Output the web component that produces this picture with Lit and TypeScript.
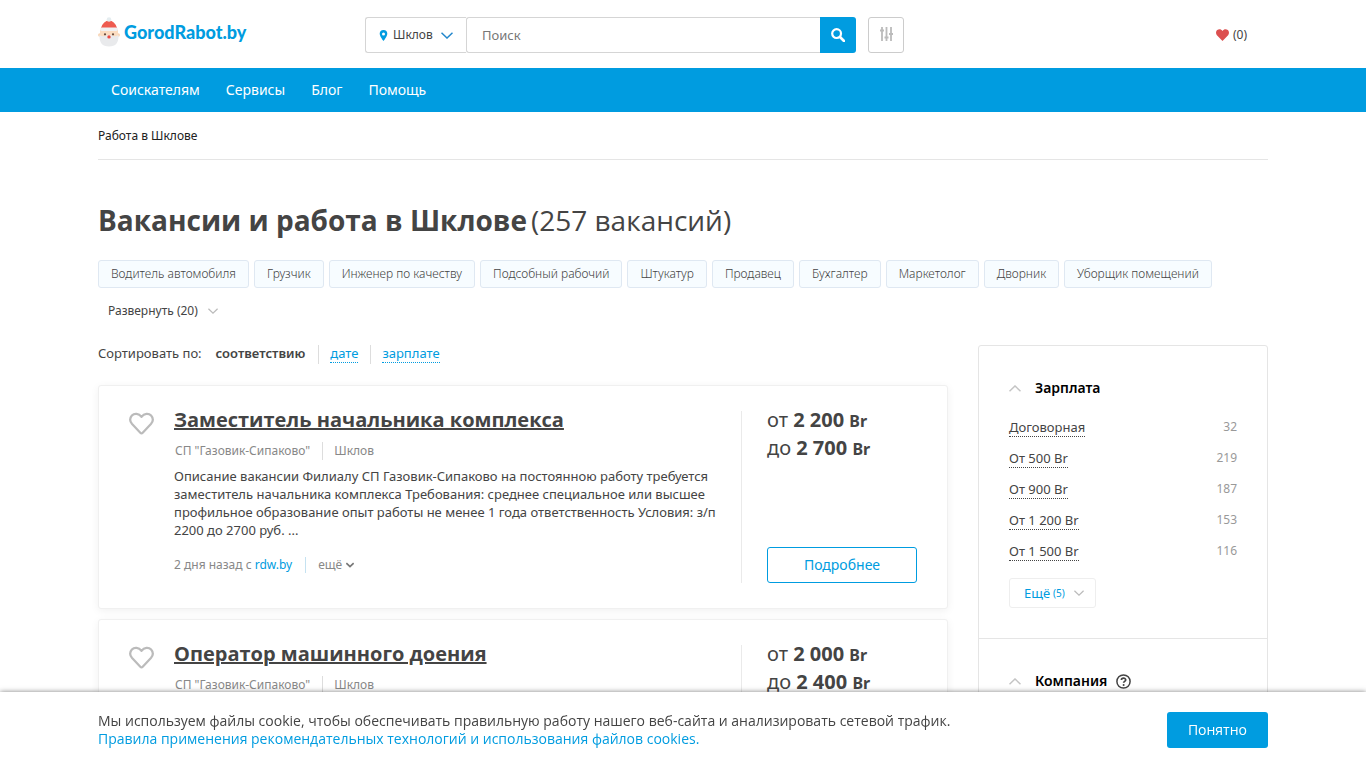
import { LitElement, html, css, svg, nothing } from "lit";
import { customElement, property, state } from "lit/decorators.js";

interface Vacancy {
  title: string;
  company: string;
  city: string;
  from: string;
  to: string;
  text?: string;
  age?: string;
  source?: string;
}

const VACANCIES: Vacancy[] = [
  {
    title: "Заместитель начальника комплекса",
    company: 'СП "Газовик-Сипаково"',
    city: "Шклов",
    text: "Описание вакансии Филиалу СП Газовик-Сипаково на постоянною работу требуется заместитель начальника комплекса Требования: среднее специальное или высшее профильное образование опыт работы не менее 1 года ответственность Условия: з/п 2200 до 2700 руб. ...",
    from: "2 200",
    to: "2 700",
    age: "2 дня назад",
    source: "rdw.by",
  },
  {
    title: "Оператор машинного доения",
    company: 'СП "Газовик-Сипаково"',
    city: "Шклов",
    from: "2 000",
    to: "2 400",
  },
];

const TAGS = [
  "Водитель автомобиля", "Грузчик", "Инженер по качеству", "Подсобный рабочий", "Штукатур",
  "Продавец", "Бухгалтер", "Маркетолог", "Дворник", "Уборщик помещений",
];

const SALARIES: [string, number][] = [
  ["Договорная", 32],
  ["От 500 Br", 219],
  ["От 900 Br", 187],
  ["От 1 200 Br", 153],
  ["От 1 500 Br", 116],
];

const chevron = (width: number, height: number, stroke: string, up = false, weight = 1.5) => html`
  <svg width=${width} height=${height} viewBox="0 0 12 7" fill="none" stroke=${stroke} stroke-width=${weight} aria-hidden="true">
    ${up ? svg`<path d="M.5 6.2 6 1l5.500 5.200"/>` : svg`<path d="M.5.8 6 6 11.500.8"/>`}
  </svg>`;

const base = css`
  * { box-sizing: border-box; }
  a { color: #009ce0; text-decoration: none; }
  button, input { font: inherit; color: inherit; margin: 0; }
  button { cursor: pointer; }
  svg { display: block; flex: none; }
`;

@customElement("vacancy-card")
class VacancyCard extends LitElement {
  @property({ attribute: false }) vacancy!: Vacancy;

  static styles = [base, css`
    :host { display: block; }
    .card {
      display: flex;
      padding: 25px 30px;
      border: 1px solid #f0f0f0;
      border-radius: 3px;
      background: #fff;
      box-shadow: 0 2px 8px rgba(0, 0, 0, .06);
    }
    .like { flex: none; align-self: flex-start; width: 45px; padding: 0; border: 0; background: none; }
    .body { flex: 1; min-width: 0; padding-right: 24px; }
    .title { margin: 0 0 13px; font: 700 20px/18px "Open Sans", "Noto Sans", sans-serif; }
    .title a { color: #444; text-decoration: underline; }
    .meta { display: flex; font-size: 12px; line-height: 18px; color: #888; }
    .meta span { padding: 0 12px 0 1px; }
    .meta span + span { padding-left: 11px; border-left: 1px solid #ddd; }
    .text { margin: 7px 0 18px; line-height: 18px; }
    .foot { display: flex; font-size: 12px; line-height: 16px; color: #888; }
    .more {
      display: flex; align-items: center; gap: 4px;
      margin-left: 13px; padding: 0 0 0 12px;
      border: 0; border-left: 1px solid #c5e2f1; background: none;
    }
    .pay {
      display: flex; flex-direction: column; gap: 10px;
      flex: none; width: 176px; min-height: 172px; padding-left: 25px;
      border-left: 1px solid #eaeaea;
      font-size: 20px; line-height: 18px;
    }
    .currency { font-size: 16px; line-height: 16px; }
    .details {
      margin-top: auto; height: 36px;
      border: 1px solid #009ce0; border-radius: 3px;
      font-size: 14px; line-height: 34px; text-align: center;
    }
  `];

  render() {
    const v = this.vacancy;
    return html`
      <article class="card">
        <button class="like" aria-label="В избранное">
          <svg width="25" height="24" viewBox="0 0 25 24" fill="none" stroke="#bbb" stroke-width="2.200" stroke-linejoin="round">
            <path d="M12.500 5.800C9.800 2 5.100 2.100 2.900 4.600.7 7.100.9 10.500 3.100 13l8.200 8.800q1.200 1.300 2.400 0l8.200-8.800C24.100 10.500 24.300 7.100 22.100 4.600 19.900 2.100 15.200 2 12.500 5.800Z"/>
          </svg>
        </button>
        <div class="body">
          <h2 class="title"><a href="#">${v.title}</a></h2>
          <div class="meta"><span>${v.company}</span><span>${v.city}</span></div>
          ${v.text ? html`<p class="text">${v.text}</p>` : nothing}
          ${v.age ? html`
            <div class="foot">
              <span>${v.age} с <a href="#">${v.source}</a></span>
              <button class="more">ещё ${chevron(8, 6, "#777", false, 2.6)}</button>
            </div>` : nothing}
        </div>
        <div class="pay">
          <div>от <b>${v.from} <span class="currency">Br</span></b></div>
          <div>до <b>${v.to} <span class="currency">Br</span></b></div>
          <a class="details" href="#">Подробнее</a>
        </div>
      </article>`;
  }
}

@customElement("filter-section")
class FilterSection extends LitElement {
  @property() heading = "";
  @property({ type: Boolean }) help = false;

  static styles = [base, css`
    :host { display: block; padding: 30px; }
    :host(:not(:first-child)) { border-top: 1px solid #e5e5e5; }
    .heading {
      display: flex; align-items: center;
      margin: 0 0 18px; color: #000;
      font-size: 14px; line-height: 24px; font-weight: 600;
    }
    .label { margin: 0 9px 0 14px; }
  `];

  render() {
    return html`
      <h3 class="heading">
        ${chevron(12, 7, "#c4c4c4", true)}
        <span class="label">${this.heading}</span>
        ${this.help ? html`
          <svg width="15" height="15" viewBox="0 0 15 15" fill="none" stroke="#444" aria-hidden="true">
            <circle cx="7.500" cy="7.500" r="6.600" stroke-width="1.500"/>
            <path d="M5.400 6.100C5.400 3.500 9.700 3.500 9.700 6c0 1.400-2.100 1.300-2.100 2.800" stroke-width="1.700"/>
            <circle cx="7.600" cy="11" r="1" fill="#444" stroke="none"/>
          </svg>` : nothing}
      </h3>
      <slot></slot>`;
  }
}

@customElement("app-root")
class AppRoot extends LitElement {
  @state() private cookies = true;

  static styles = [base, css`
    :host {
      display: block;
      min-height: 100vh;
      background: #fff;
      color: #444;
      font: 13px/18px "Noto Sans", "Open Sans", sans-serif;
    }
    .wrap { max-width: 1170px; margin: 0 auto; }

    .top { display: flex; align-items: flex-start; padding: 17px 0 15px; }
    .logo { display: flex; align-items: center; gap: 4px; width: 267px; font: 900 18px/30px Lato, sans-serif; }
    .search { display: flex; width: 491px; height: 36px; }
    .city {
      display: flex; align-items: center;
      width: 101px; padding: 0 13px;
      border: 1px solid #d5d5d5; border-right: 0; border-radius: 3px 0 0 3px;
      background: #fff; font-size: 12px;
    }
    .city span { flex: 1; padding-left: 5px; text-align: left; }
    .query {
      flex: 1; min-width: 0; padding: 0 15px;
      border: 1px solid #d5d5d5; border-right: 0; border-radius: 3px 0 0 3px;
      outline: 0; background: #fff;
    }
    .query::placeholder { color: #777; opacity: 1; }
    .find {
      display: grid; place-items: center; width: 36px; padding: 0;
      border: 0; border-radius: 0 3px 3px 0; background: #009ce0;
    }
    .tune {
      display: grid; place-items: center; width: 36px; height: 36px; margin-left: 12px; padding: 0;
      border: 1px solid #ccc; border-radius: 3px; background: #fff;
    }
    .saved { display: flex; align-items: center; gap: 4px; margin: 0 21px 0 auto; color: #444; font-size: 12px; line-height: 36px; }

    .nav { background: #009ce0; }
    .links { display: flex; gap: 26px; padding: 0 13px; font-size: 14px; line-height: 44px; }
    .links a { color: #fff; }

    .crumbs { padding: 15px 0 14px; border-bottom: 1px solid #e5e5e5; font-size: 12px; color: #222; }
    .crumbs a { color: inherit; }
    .page-title {
      display: flex; flex-wrap: wrap; column-gap: 4px;
      margin: 40px 0 20px; font: 700 28px/40px "Open Sans", "Noto Sans", sans-serif;
    }
    .total { font-weight: 400; }
    .tags { display: flex; flex-wrap: wrap; gap: 5px; font-size: 12px; font-weight: 300; }
    .tags a {
      padding: 4px 12px; border: 1px solid #dfe8f2; border-radius: 3px;
      background: #f7fcff; color: #444;
    }
    .expand {
      display: flex; align-items: center; gap: 10px;
      margin: 14px 0 25px; padding: 0 10px; border: 0; background: none; font-size: 12px;
    }

    .columns { display: flex; align-items: flex-start; gap: 30px; }
    .main { flex: 1; min-width: 0; }
    .sort { display: flex; margin-bottom: 21px; line-height: 17px; }
    .sort b { margin: 0 13px 0 14px; font-weight: 600; }
    .sort div { height: 19px; padding: 0 12px 0 11px; border-left: 1px solid #ddd; }
    .sort a { display: block; border-bottom: 1px dotted #009ce0; }
    .cards { display: grid; gap: 10px; }

    .side { flex: none; width: 290px; border: 1px solid #e5e5e5; border-radius: 3px; }
    .options { display: grid; gap: 13px; margin: 0 0 18px; padding: 0; list-style: none; }
    .options li { display: flex; justify-content: space-between; height: 18px; }
    .options a { color: #444; border-bottom: 1px dotted #444; height: 19px; }
    .count { font-size: 12px; color: #999; }
    .extra {
      display: flex; align-items: center; height: 30px; padding: 0 11px 0 14px;
      border: 1px solid #eee; border-radius: 3px; background: #fff; color: #009ce0;
    }
    .extra small { margin: 0 9px 0 3px; font-size: 10px; }

    .cookie {
      position: fixed; left: 0; right: 0; bottom: 0; padding: 20px 0;
      background: #fff; box-shadow: 0 0 5px rgba(0, 0, 0, .5);
      font: 14px/18px "Open Sans", "Noto Sans", sans-serif;
    }
    .notice { display: flex; align-items: center; justify-content: space-between; }
    .notice p { margin: 0; }
    .notice a { display: block; }
    .accept { height: 36px; padding: 0 21px; border: 0; border-radius: 3px; background: #009ce0; color: #fff; }
  `];

  render() {
    return html`
      <header>
        <div class="wrap top">
          <a class="logo" href="#">
            <svg width="22" height="30" viewBox="0 0 22 30" aria-hidden="true">
              <circle cx="1.800" cy="18" r="1.800" fill="#f9d5b5"/>
              <circle cx="20.200" cy="18" r="1.800" fill="#f9d5b5"/>
              <path d="M2 13h18v7H2z" fill="#fbdcc0"/>
              <path d="M1.500 18q3 2 5 1 4.500-2 9 0 2 1 5-1Q21 29.500 11 29.500 1 29.500 1.500 18Z" fill="#e9eaec"/>
              <path d="M3 11Q5.500 3.500 11 3.500t8 7.500Z" fill="#ee5b50"/>
              <rect x="2" y="10.500" width="18" height="3.500" rx="1.700" fill="#f0f1f3"/>
              <circle cx="11" cy="2.500" r="2.300" fill="#e5edf0"/>
              <circle cx="7" cy="17.300" r="1.100" fill="#65483b"/>
              <circle cx="15" cy="17.300" r="1.100" fill="#65483b"/>
              <circle cx="11" cy="19.900" r="1.700" fill="#ed4a42"/>
            </svg>
            GorodRabot.by
          </a>
          <form class="search">
            <button class="city" type="button">
              <svg width="9" height="11" viewBox="0 0 9 11" aria-hidden="true">
                <path fill="#009ce0" fill-rule="evenodd" d="M4.500 0A3.800 3.800 0 0 0 .7 3.800C.7 6.500 4.500 11 4.500 11S8.300 6.500 8.300 3.800A3.800 3.800 0 0 0 4.500 0Zm0 2.400a1.500 1.500 0 1 1 0 3 1.500 1.500 0 0 1 0-3Z"/>
              </svg>
              <span>Шклов</span>
              ${chevron(12, 7, "#2387cc")}
            </button>
            <input class="query" type="search" placeholder="Поиск" aria-label="Поиск">
            <button class="find" type="button" aria-label="Найти">
              <svg width="14" height="14" viewBox="0 0 14 14" fill="none" stroke="#fff" aria-hidden="true">
                <circle cx="5.600" cy="5.600" r="4.400" stroke-width="2.200"/>
                <path d="m9 9 4 4" stroke-width="2.600" stroke-linecap="round"/>
              </svg>
            </button>
          </form>
          <button class="tune" aria-label="Фильтры">
            <svg width="13" height="17" viewBox="0 0 13 17" stroke="#bbb" stroke-width="1.800" aria-hidden="true">
              <path d="M2 0v14M6.500 0v14M11 0v14"/>
              <path d="M0 3.500h4M4.500 10.500h4M9 7h4"/>
            </svg>
          </button>
          <a class="saved" href="#">
            <svg width="13" height="12" viewBox="0 0 13 12" fill="#dc5050" aria-hidden="true">
              <path d="M6.500 12 .9 6.300C-.4 4.800-.2 2.300 1.200 1.100 2.900-.3 5.200 0 6.500 1.900 7.800 0 10.100-.3 11.800 1.100c1.400 1.200 1.600 3.700.3 5.200Z"/>
            </svg>
            (0)
          </a>
        </div>
        <nav class="nav">
          <div class="wrap links">
            ${["Соискателям", "Сервисы", "Блог", "Помощь"].map((t) => html`<a href="#">${t}</a>`)}
          </div>
        </nav>
      </header>

      <main class="wrap">
        <div class="crumbs"><a href="#">Работа в Шклове</a></div>
        <h1 class="page-title"><span>Вакансии и работа в Шклове</span> <span class="total">(257 вакансий)</span></h1>
        <div class="tags">${TAGS.map((t) => html`<a href="#">${t}</a>`)}</div>
        <button class="expand">Развернуть (20) ${chevron(10, 6, "#bbb")}</button>

        <div class="columns">
          <section class="main">
            <div class="sort">
              Сортировать по: <b>соответствию</b>
              <div><a href="#">дате</a></div>
              <div><a href="#">зарплате</a></div>
            </div>
            <div class="cards">
              ${VACANCIES.map((v) => html`<vacancy-card .vacancy=${v}></vacancy-card>`)}
            </div>
          </section>

          <aside class="side">
            <filter-section heading="Зарплата">
              <ul class="options">
                ${SALARIES.map(([label, count]) => html`
                  <li><a href="#">${label}</a><span class="count">${count}</span></li>`)}
              </ul>
              <button class="extra">Ещё <small>(5)</small>${chevron(10, 6, "#bbb")}</button>
            </filter-section>
            <filter-section heading="Компания" help></filter-section>
          </aside>
        </div>
      </main>

      ${this.cookies ? html`
        <div class="cookie">
          <div class="wrap notice">
            <p>
              Мы используем файлы cookie, чтобы обеспечивать правильную работу нашего веб-сайта и анализировать сетевой трафик.
              <a href="#">Правила применения рекомендательных технологий и использования файлов cookies.</a>
            </p>
            <button class="accept" @click=${() => (this.cookies = false)}>Понятно</button>
          </div>
        </div>` : nothing}
    `;
  }
}
